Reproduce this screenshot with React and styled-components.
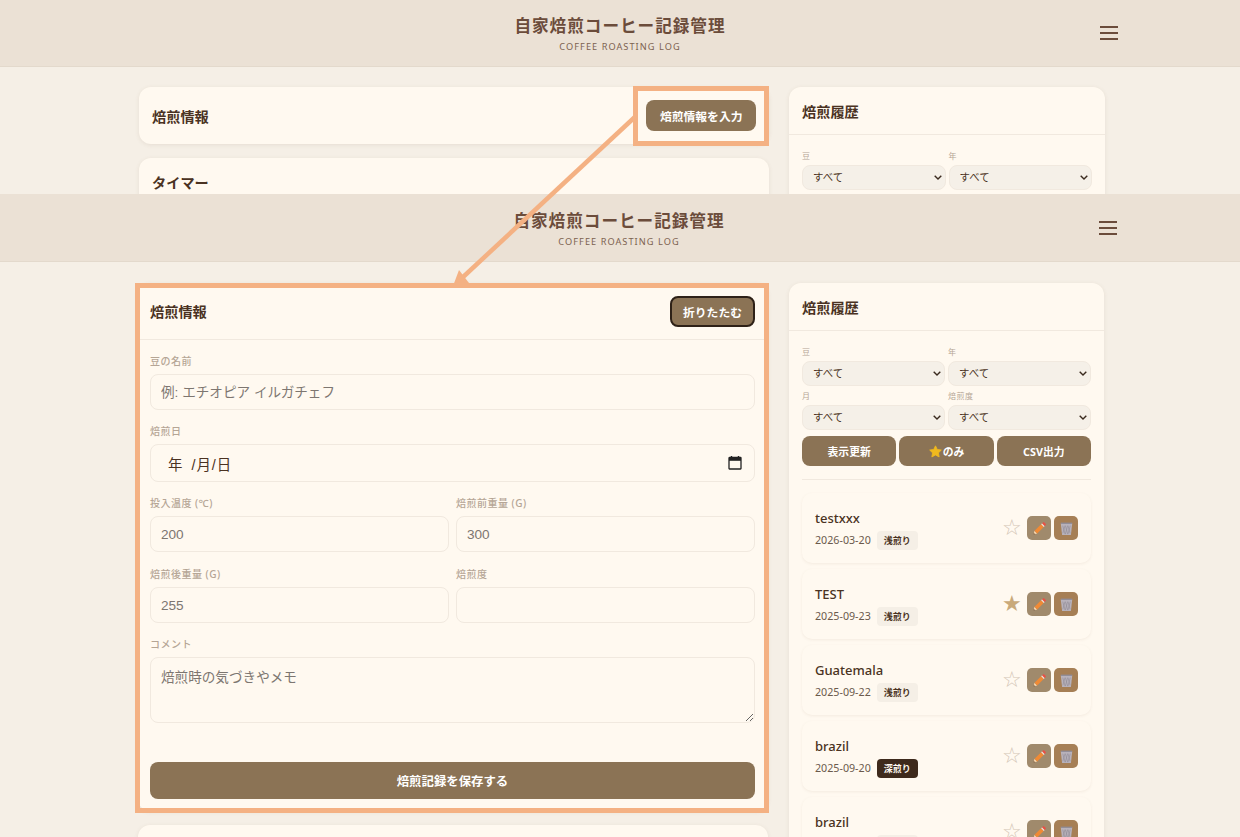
import React from "react";
import styled, { createGlobalStyle } from "styled-components";

const GlobalStyle = createGlobalStyle`
    html, body {
        margin: 0;
        padding: 0;
        background: #f5efe6;
        font-family: "Noto Sans", "Noto Sans CJK JP", sans-serif;
        color: #4a3222;
    }
    * {
        box-sizing: border-box;
    }
`;

const chevron = `url("data:image/svg+xml,%3Csvg xmlns='http://www.w3.org/2000/svg' width='8' height='5' viewBox='0 0 8 5'%3E%3Cpath d='M.7.7L4 4l3.300-3.300' fill='none' stroke='%233a2a1e' stroke-width='1.400'/%3E%3C/svg%3E")`;

const Page = styled.div`
    position: relative;
    width: 1240px;
    height: 837px;
    overflow: hidden;
`;
const Shot = styled.section`
    height: ${(p) => p.$height}px;
    overflow: hidden;
    background: #f5efe6;
`;
const Header = styled.header`
    display: grid;
    grid-template-columns: 1fr auto 1fr;
    align-items: center;
    height: ${(p) => p.$height}px;
    padding: 0 ${(p) => 122 + p.$shift}px 0 ${(p) => 122 - p.$shift}px;
    background: #ebe1d5;
    border-bottom: 1px solid #e3d9cc;
`;
const Brand = styled.div`
    grid-column: 2;
    display: flex;
    flex-direction: column;
    align-items: center;
    gap: 3px;
    padding-top: ${(p) => p.$shift}px;
`;
const Title = styled.h1`
    margin: 0;
    font-size: 16.6px;
    line-height: 24px;
    font-weight: 600;
    letter-spacing: 1px;
    color: #6b4c3b;
`;
const Subtitle = styled.div`
    font-size: 9.2px;
    line-height: 12px;
    letter-spacing: 1.05px;
    color: #7d6250;
`;
const Burger = styled.button`
    grid-column: 3;
    justify-self: end;
    display: flex;
    flex-direction: column;
    gap: 4px;
    width: 18px;
    padding: 0;
    border: none;
    background: none;
    span {
        height: 2px;
        background: #6b4c3b;
    }
`;
const Main = styled.main`
    display: grid;
    grid-template-columns: 630px ${(p) => p.$side}px;
    column-gap: ${(p) => 789 - p.$left - 630}px;
    align-items: start;
    padding: ${(p) => p.$top}px 0 0 ${(p) => p.$left}px;
`;
const Column = styled.div`
    display: flex;
    flex-direction: column;
    gap: 14px;
`;
const Card = styled.div`
    background: #fff9f0;
    border-radius: 12px;
    box-shadow: 0 1px 4px rgba(110, 80, 50, 0.1);
`;
const CardHead = styled.div`
    display: flex;
    align-items: center;
    justify-content: space-between;
    height: ${(p) => p.$height}px;
    padding: 0 13px 0 ${(p) => p.$inset || 13}px;
    border-bottom: ${(p) => (p.$line ? "1px solid #f1e9df" : "none")};
`;
const CardTitle = styled.h2`
    margin: 0;
    font-size: 14.2px;
    font-weight: 700;
    color: #4a3222;
`;
const TimerHead = styled.div`
    padding: 14px 13px 60px;
`;
const SolidButton = styled.button`
    height: ${(p) => p.$height || 31}px;
    padding: 0 ${(p) => p.$pad || 13.500}px;
    border: ${(p) => (p.$focus ? "2px solid #2e2117" : "none")};
    border-radius: 8px;
    background: #8b7355;
    color: #fff;
    font-family: inherit;
    font-size: ${(p) => p.$size || 11.800}px;
    font-weight: 700;
    white-space: nowrap;
`;
const WideButton = styled(SolidButton)`
    width: 100%;
    margin-top: 24px;
    height: 37px;
    font-size: 12.400px;
`;
const FormBody = styled.div`
    display: flex;
    flex-direction: column;
    gap: 15px;
    padding: 15px 13px 12px 12px;
`;
const Pair = styled.div`
    display: grid;
    grid-template-columns: 1fr 1fr;
    column-gap: 7px;
    & + & {
        margin-top: 1px;
    }
`;
const Field = styled.label`
    display: flex;
    flex-direction: column;
    gap: 6px;
    min-width: 0;
`;
const FieldName = styled.span`
    font-size: 10px;
    line-height: 13px;
    font-weight: 500;
    letter-spacing: 0.5px;
    color: #b5a595;
`;
const TextInput = styled.input`
    width: 100%;
    height: 36px;
    padding: 0 10px;
    border: 1px solid #f1e9df;
    border-radius: 8px;
    background: #fff9f0;
    font-family: "Liberation Sans", "Noto Sans CJK JP", sans-serif;
    font-size: 13.600px;
    outline: none;
    &::placeholder {
        color: #7d7670;
        opacity: 1;
    }
`;
const DateBox = styled.div`
    display: flex;
    align-items: center;
    justify-content: space-between;
    height: 38px;
    padding: 0 12px 0 17px;
    border: 1px solid #f1e9df;
    border-radius: 8px;
    font-family: "Liberation Sans", "Noto Sans CJK JP", sans-serif;
    font-size: 14.400px;
    color: #4a3222;
`;
const DateText = styled.span`
    word-spacing: 3px;
    letter-spacing: 1px;
`;
const TextArea = styled.textarea`
    display: block;
    width: 100%;
    height: 66px;
    padding: 8px 10px;
    border: 1px solid #f1e9df;
    border-radius: 8px;
    background: #fff9f0;
    font-family: "Liberation Sans", "Noto Sans CJK JP", sans-serif;
    font-size: 13.600px;
    outline: none;
    &::placeholder {
        color: #7d7670;
        opacity: 1;
    }
`;
const HistoryBody = styled.div`
    padding: 15px 13px 0;
`;
const FilterGrid = styled.div`
    display: grid;
    grid-template-columns: 1fr 1fr;
    gap: 4px 3px;
`;
const FilterField = styled.label`
    display: flex;
    flex-direction: column;
    gap: 4px;
    min-width: 0;
`;
const FilterName = styled.span`
    font-size: 8px;
    line-height: 11px;
    letter-spacing: 0.5px;
    color: #b5a595;
`;
const Select = styled.select`
    appearance: none;
    width: 100%;
    height: 25px;
    padding: 0 6px 2px 10px;
    border: 1px solid #f1e9df;
    border-radius: 8px;
    background: #f5f0e8 ${chevron} no-repeat right 3px center;
    color: #4a3222;
    font-family: inherit;
    font-size: 10.400px;
`;
const ActionRow = styled.div`
    display: grid;
    grid-template-columns: repeat(3, 1fr);
    gap: 3px;
    margin-top: 6px;
`;
const ActionButton = styled(SolidButton)`
    display: flex;
    align-items: center;
    justify-content: center;
    gap: 1px;
    padding: 0;
`;
const Rule = styled.hr`
    height: 1px;
    margin: 13px 0;
    border: none;
    background: #f1e9df;
`;
const RoastList = styled.ul`
    display: flex;
    flex-direction: column;
    gap: 6px;
    margin: 0;
    padding: 0;
    list-style: none;
`;
const RoastItem = styled.li`
    display: flex;
    align-items: center;
    justify-content: space-between;
    height: 70px;
    padding: 0 13px;
    border-radius: 10px;
    background: #fff9f0;
    box-shadow: 0 1px 3px rgba(110, 80, 50, 0.08);
`;
const RoastText = styled.div`
    display: flex;
    flex-direction: column;
    gap: 4px;
    margin-top: 2px;
`;
const RoastName = styled.div`
    font-size: 13px;
    line-height: 18px;
    font-weight: 500;
    color: #4a3222;
`;
const RoastMeta = styled.div`
    display: flex;
    align-items: center;
    gap: 6px;
    font-size: 10.700px;
    color: #6b5a4c;
`;
const Badge = styled.span`
    display: flex;
    align-items: center;
    justify-content: center;
    width: 41px;
    height: 19px;
    border-radius: 4px;
    background: ${(p) => (p.$dark ? "#3e2a1c" : "#f5efe6")};
    color: ${(p) => (p.$dark ? "#fff9f0" : "#4a3222")};
    font-size: 9px;
    font-weight: 700;
`;
const RoastTools = styled.div`
    display: flex;
    align-items: center;
    gap: 3px;
`;
const StarMark = styled.span`
    width: 18px;
    margin-right: 4px;
    text-align: center;
    font-family: "DejaVu Sans", sans-serif;
    font-size: 22px;
    line-height: 24px;
    color: ${(p) => (p.$on ? "#c9a97a" : "#d4c6b6")};
`;
const ToolButton = styled.button`
    display: flex;
    align-items: center;
    justify-content: center;
    width: 24px;
    height: 24px;
    padding: 0;
    border: none;
    border-radius: 5px;
    background: ${(p) => p.$bg};
`;
const Highlight = styled.div`
    position: absolute;
    left: ${(p) => p.$x}px;
    top: ${(p) => p.$y}px;
    width: ${(p) => p.$w}px;
    height: ${(p) => p.$h}px;
    border: 5px solid #f4b183;
    pointer-events: none;
`;
const ArrowLayer = styled.svg`
    position: absolute;
    left: 0;
    top: 0;
    pointer-events: none;
`;

const roasts = [
    { name: "testxxx", date: "2026-03-20", level: "浅煎り", star: false },
    { name: "TEST", date: "2025-09-23", level: "浅煎り", star: true },
    { name: "Guatemala", date: "2025-09-22", level: "浅煎り", star: false },
    { name: "brazil", date: "2025-09-20", level: "深煎り", star: false },
    { name: "brazil", date: "2025-09-19", level: "浅煎り", star: false },
];

const PencilIcon = () => (
    <svg width="15" height="15" viewBox="0 0 16 16">
        <path d="M1.500 14.500l1.200-4 2.800 2.800z" fill="#f6d3a8" />
        <path d="M1.500 14.500l.5-1.700 1.200 1.200z" fill="#4a3222" />
        <path d="M2.700 10.500l7-7 2.800 2.800-7 7z" fill="#f08a35" />
        <path d="M9.700 3.500l1.100-1.100 2.800 2.800-1.100 1.100z" fill="#f2dcd0" />
        <path d="M10.800 2.400l.9-.9c.4-.4 1-.4 1.400 0l1.400 1.400c.4.4.4 1 0 1.400l-.9.9z" fill="#ea4f45" />
    </svg>
);

const TrashIcon = () => (
    <svg width="15" height="15" viewBox="0 0 16 16">
        <path d="M2 2h12v1.500l-1.300 11.300H3.300L2 3.500z" fill="#b8b2bb" />
        <path d="M2 2.400h12" stroke="#8f8a94" strokeWidth="1.400" />
        <path d="M4 5l2.500 9M6.800 5l2.500 9M9.600 5l2.200 8M12 5l-2.500 9M9.200 5l-2.500 9M6.400 5l-2.300 8" stroke="#8f8a94" strokeWidth="0.6" fill="none" />
    </svg>
);

const GoldStar = () => (
    <svg width="13" height="13" viewBox="0 0 16 16">
        <path d="M8 1l2.200 4.500 5 .7-3.600 3.500.9 5L8 12.300 3.500 14.700l.9-5L.8 6.200l5-.7z" fill="#f0b91e" stroke="#f0b91e" strokeLinejoin="round" />
    </svg>
);

const CalendarIcon = () => (
    <svg width="14" height="14" viewBox="0 0 14 14">
        <path d="M3.500 0v2M10.500 0v2" stroke="#222" strokeWidth="1.400" />
        <path d="M1.500 1.500h11a.5.5 0 0 1 .5.5v10.500a.5.5 0 0 1-.5.5h-11a.5.5 0 0 1-.5-.5V2a.5.5 0 0 1 .5-.5z" fill="none" stroke="#222" strokeWidth="1.300" />
        <path d="M1 2h12v2.800H1z" fill="#222" />
    </svg>
);

const Menu = () => (
    <Burger aria-label="menu">
        <span />
        <span />
        <span />
    </Burger>
);

const TopBar = ({ height, shift }) => (
    <Header $height={height} $shift={shift}>
        <Brand $shift={shift}>
            <Title>自家焙煎コーヒー記録管理</Title>
            <Subtitle>COFFEE ROASTING LOG</Subtitle>
        </Brand>
        <Menu />
    </Header>
);

const Filter = ({ name }) => (
    <FilterField>
        <FilterName>{name}</FilterName>
        <Select>
            <option>すべて</option>
        </Select>
    </FilterField>
);

const History = () => (
    <Card>
        <CardHead $height={48} $line>
            <CardTitle>焙煎履歴</CardTitle>
        </CardHead>
        <HistoryBody>
            <FilterGrid>
                <Filter name="豆" />
                <Filter name="年" />
                <Filter name="月" />
                <Filter name="焙煎度" />
            </FilterGrid>
            <ActionRow>
                <ActionButton $height={30} $size={10.8}>表示更新</ActionButton>
                <ActionButton $height={30} $size={10.8}><GoldStar />のみ</ActionButton>
                <ActionButton $height={30} $size={10.8}>CSV出力</ActionButton>
            </ActionRow>
            <Rule />
            <RoastList>
                {roasts.map((r, i) => (
                    <RoastItem key={i}>
                        <RoastText>
                            <RoastName>{r.name}</RoastName>
                            <RoastMeta>
                                {r.date}
                                <Badge $dark={r.level === "深煎り"}>{r.level}</Badge>
                            </RoastMeta>
                        </RoastText>
                        <RoastTools>
                            <StarMark $on={r.star}>{r.star ? "★" : "☆"}</StarMark>
                            <ToolButton $bg="#a08a6c"><PencilIcon /></ToolButton>
                            <ToolButton $bg="#a67f55"><TrashIcon /></ToolButton>
                        </RoastTools>
                    </RoastItem>
                ))}
            </RoastList>
        </HistoryBody>
    </Card>
);

const RoastForm = () => (
    <Card>
        <CardHead $height={57} $inset={12} $line>
            <CardTitle>焙煎情報</CardTitle>
            <SolidButton $focus $pad={11}>折りたたむ</SolidButton>
        </CardHead>
        <FormBody>
            <Field>
                <FieldName>豆の名前</FieldName>
                <TextInput placeholder="例: エチオピア イルガチェフ" />
            </Field>
            <Field>
                <FieldName>焙煎日</FieldName>
                <DateBox>
                    <DateText>年 /月/日</DateText>
                    <CalendarIcon />
                </DateBox>
            </Field>
            <Pair>
                <Field>
                    <FieldName>投入温度 (℃)</FieldName>
                    <TextInput placeholder="200" />
                </Field>
                <Field>
                    <FieldName>焙煎前重量 (G)</FieldName>
                    <TextInput placeholder="300" />
                </Field>
            </Pair>
            <Pair>
                <Field>
                    <FieldName>焙煎後重量 (G)</FieldName>
                    <TextInput placeholder="255" />
                </Field>
                <Field>
                    <FieldName>焙煎度</FieldName>
                    <TextInput />
                </Field>
            </Pair>
            <Field>
                <FieldName>コメント</FieldName>
                <TextArea placeholder="焙煎時の気づきやメモ" />
            </Field>
            <WideButton>焙煎記録を保存する</WideButton>
        </FormBody>
    </Card>
);

const App = () => (
    <Page>
        <GlobalStyle />
        <Shot $height={194}>
            <TopBar height={67} shift={0} />
            <Main $top={20} $left={139} $side={316}>
                <Column>
                    <Card>
                        <CardHead $height={57}>
                            <CardTitle>焙煎情報</CardTitle>
                            <SolidButton>焙煎情報を入力</SolidButton>
                        </CardHead>
                    </Card>
                    <Card>
                        <TimerHead>
                            <CardTitle>タイマー</CardTitle>
                        </TimerHead>
                    </Card>
                </Column>
                <History />
            </Main>
        </Shot>
        <Shot $height={643}>
            <TopBar height={68} shift={1} />
            <Main $top={21} $left={138} $side={315}>
                <Column>
                    <RoastForm />
                    <Card>
                        <TimerHead />
                    </Card>
                </Column>
                <History />
            </Main>
        </Shot>
        <Highlight $x={633} $y={86} $w={136} $h={60} />
        <Highlight $x={135} $y={283} $w={634} $h={530} />
        <ArrowLayer width="1240" height="837">
            <path d="M636 116L462 278" stroke="#f4b183" strokeWidth="4.5" fill="none" />
            <path d="M453 286L459 270L469 283z" fill="#f4b183" />
        </ArrowLayer>
    </Page>
);

export default App;
